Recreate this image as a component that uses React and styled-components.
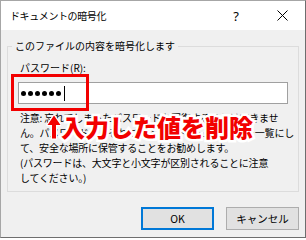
import React from 'react';
import styled, { createGlobalStyle } from 'styled-components';

const Global = createGlobalStyle`
  * {
    box-sizing: border-box;
  }
  body {
    margin: 0;
    background: #ffffff;
    font-family: "Noto Sans CJK JP", "Noto Sans", sans-serif;
  }
`;

const Window = styled.div`
  position: relative;
  width: 306px;
  height: 238px;
  display: flex;
  flex-direction: column;
  background: #f0f0f0;
  border: 1px solid #6e6e6e;
  border-left-color: #a6a6a6;
  border-top-color: #a6a6a6;
  color: #000;
`;

const TitleBar = styled.div`
  height: 29px;
  display: flex;
  align-items: center;
  background: #ffffff;
`;

const Title = styled.div`
  flex: 1;
  padding-left: 9px;
  font-size: 10px;
  line-height: 14px;
  letter-spacing: -0.4px;
`;

const TitleButton = styled.div`
  width: 46px;
  height: 29px;
  display: flex;
  align-items: center;
  justify-content: center;
  font-family: "Noto Sans", sans-serif;
  font-size: 13px;
`;

const Body = styled.div`
  flex: 1;
  display: flex;
  flex-direction: column;
  padding: 0 6px;
`;

const Group = styled.fieldset`
  margin: 9px 0 0;
  padding: 0;
  min-width: 0;
  border: 1px solid #dcdcdc;
`;

const Legend = styled.legend`
  margin-left: 4px;
  padding: 0 3px;
  font-size: 10px;
  line-height: 14px;
`;

const GroupContent = styled.div`
  display: flex;
  flex-direction: column;
  padding: 8px 10px 6px;
`;

const Label = styled.div`
  padding-left: 2px;
  font-size: 10px;
  line-height: 14px;
`;

const Input = styled.div`
  margin-top: 7px;
  height: 22px;
  display: flex;
  align-items: center;
  gap: 2px;
  padding-left: 2px;
  background: #ffffff;
  border: 1px solid #a0a0a0;
`;

const Dot = styled.span`
  width: 5px;
  height: 5px;
  border-radius: 50%;
  background: #000;
`;

const Caret = styled.span`
  width: 1px;
  height: 15px;
  margin-left: 1px;
  background: #000;
`;

const Note = styled.div`
  margin-top: 6px;
  padding-left: 2px;
  font-size: 10px;
  line-height: 15px;
  letter-spacing: -0.2px;
  white-space: nowrap;
`;

const Footer = styled.div`
  margin-top: 15px;
  display: flex;
  justify-content: flex-end;
  gap: 12px;
`;

const Button = styled.div`
  width: 73px;
  height: 23px;
  display: flex;
  align-items: center;
  justify-content: center;
  background: #e1e1e1;
  border: ${(p) => (p.$primary ? '2px solid #0078d7' : '1px solid #adadad')};
  font-size: 10.5px;
`;

const RedBox = styled.div`
  position: absolute;
  left: 10px;
  top: 73px;
  width: 78px;
  height: 37px;
  border: 3px solid #f20000;
`;

const Callout = styled.div`
  position: absolute;
  left: 40px;
  top: 113px;
  display: flex;
  align-items: center;
`;

const CalloutText = styled.span`
  font-size: 24px;
  line-height: 24px;
  font-weight: 900;
  color: #f20000;
  white-space: nowrap;
  -webkit-text-stroke: 5px #ffffff;
  paint-order: stroke fill;
`;

const CloseIcon = () => (
  <svg width="11" height="11" viewBox="0 0 11 11">
    <path d="M0.5 0.5 L10.5 10.5 M10.5 0.5 L0.5 10.5" stroke="#000" strokeWidth="1" />
  </svg>
);

const UpArrow = () => (
  <svg width="20" height="26" viewBox="0 0 20 26">
    <path
      d="M13.5 1.5 L20 11 L15.5 11 L15.5 24.5 L11.5 24.5 L11.5 11 L7 11 Z"
      transform="translate(-0.5 0)"
      fill="#f20000"
      stroke="#ffffff"
      strokeWidth="2.5"
      strokeLinejoin="round"
      paintOrder="stroke fill"
    />
  </svg>
);

const noteLines = [
  '注意: 忘れてしまったパスワードを回復することはできませ',
  'ん。パスワードと、それに対応するドキュメント名を一覧にし',
  'て、安全な場所に保管することをお勧めします。',
  '(パスワードは、大文字と小文字が区別されることに注意',
  'してください。)',
];

export default function App() {
  return (
    <>
      <Global />
      <Window>
        <TitleBar>
          <Title>ドキュメントの暗号化</Title>
          <TitleButton>?</TitleButton>
          <TitleButton>
            <CloseIcon />
          </TitleButton>
        </TitleBar>
        <Body>
          <Group>
            <Legend>このファイルの内容を暗号化します</Legend>
            <GroupContent>
              <Label>パスワード(R):</Label>
              <Input>
                {[0, 1, 2, 3, 4, 5].map((i) => (
                  <Dot key={i} />
                ))}
                <Caret />
              </Input>
              <Note>
                {noteLines.map((line) => (
                  <div key={line}>{line}</div>
                ))}
              </Note>
            </GroupContent>
          </Group>
          <Footer>
            <Button $primary>OK</Button>
            <Button>キャンセル</Button>
          </Footer>
        </Body>
        <RedBox />
        <Callout>
          <UpArrow />
          <CalloutText>入力した値を削除</CalloutText>
        </Callout>
      </Window>
    </>
  );
}
